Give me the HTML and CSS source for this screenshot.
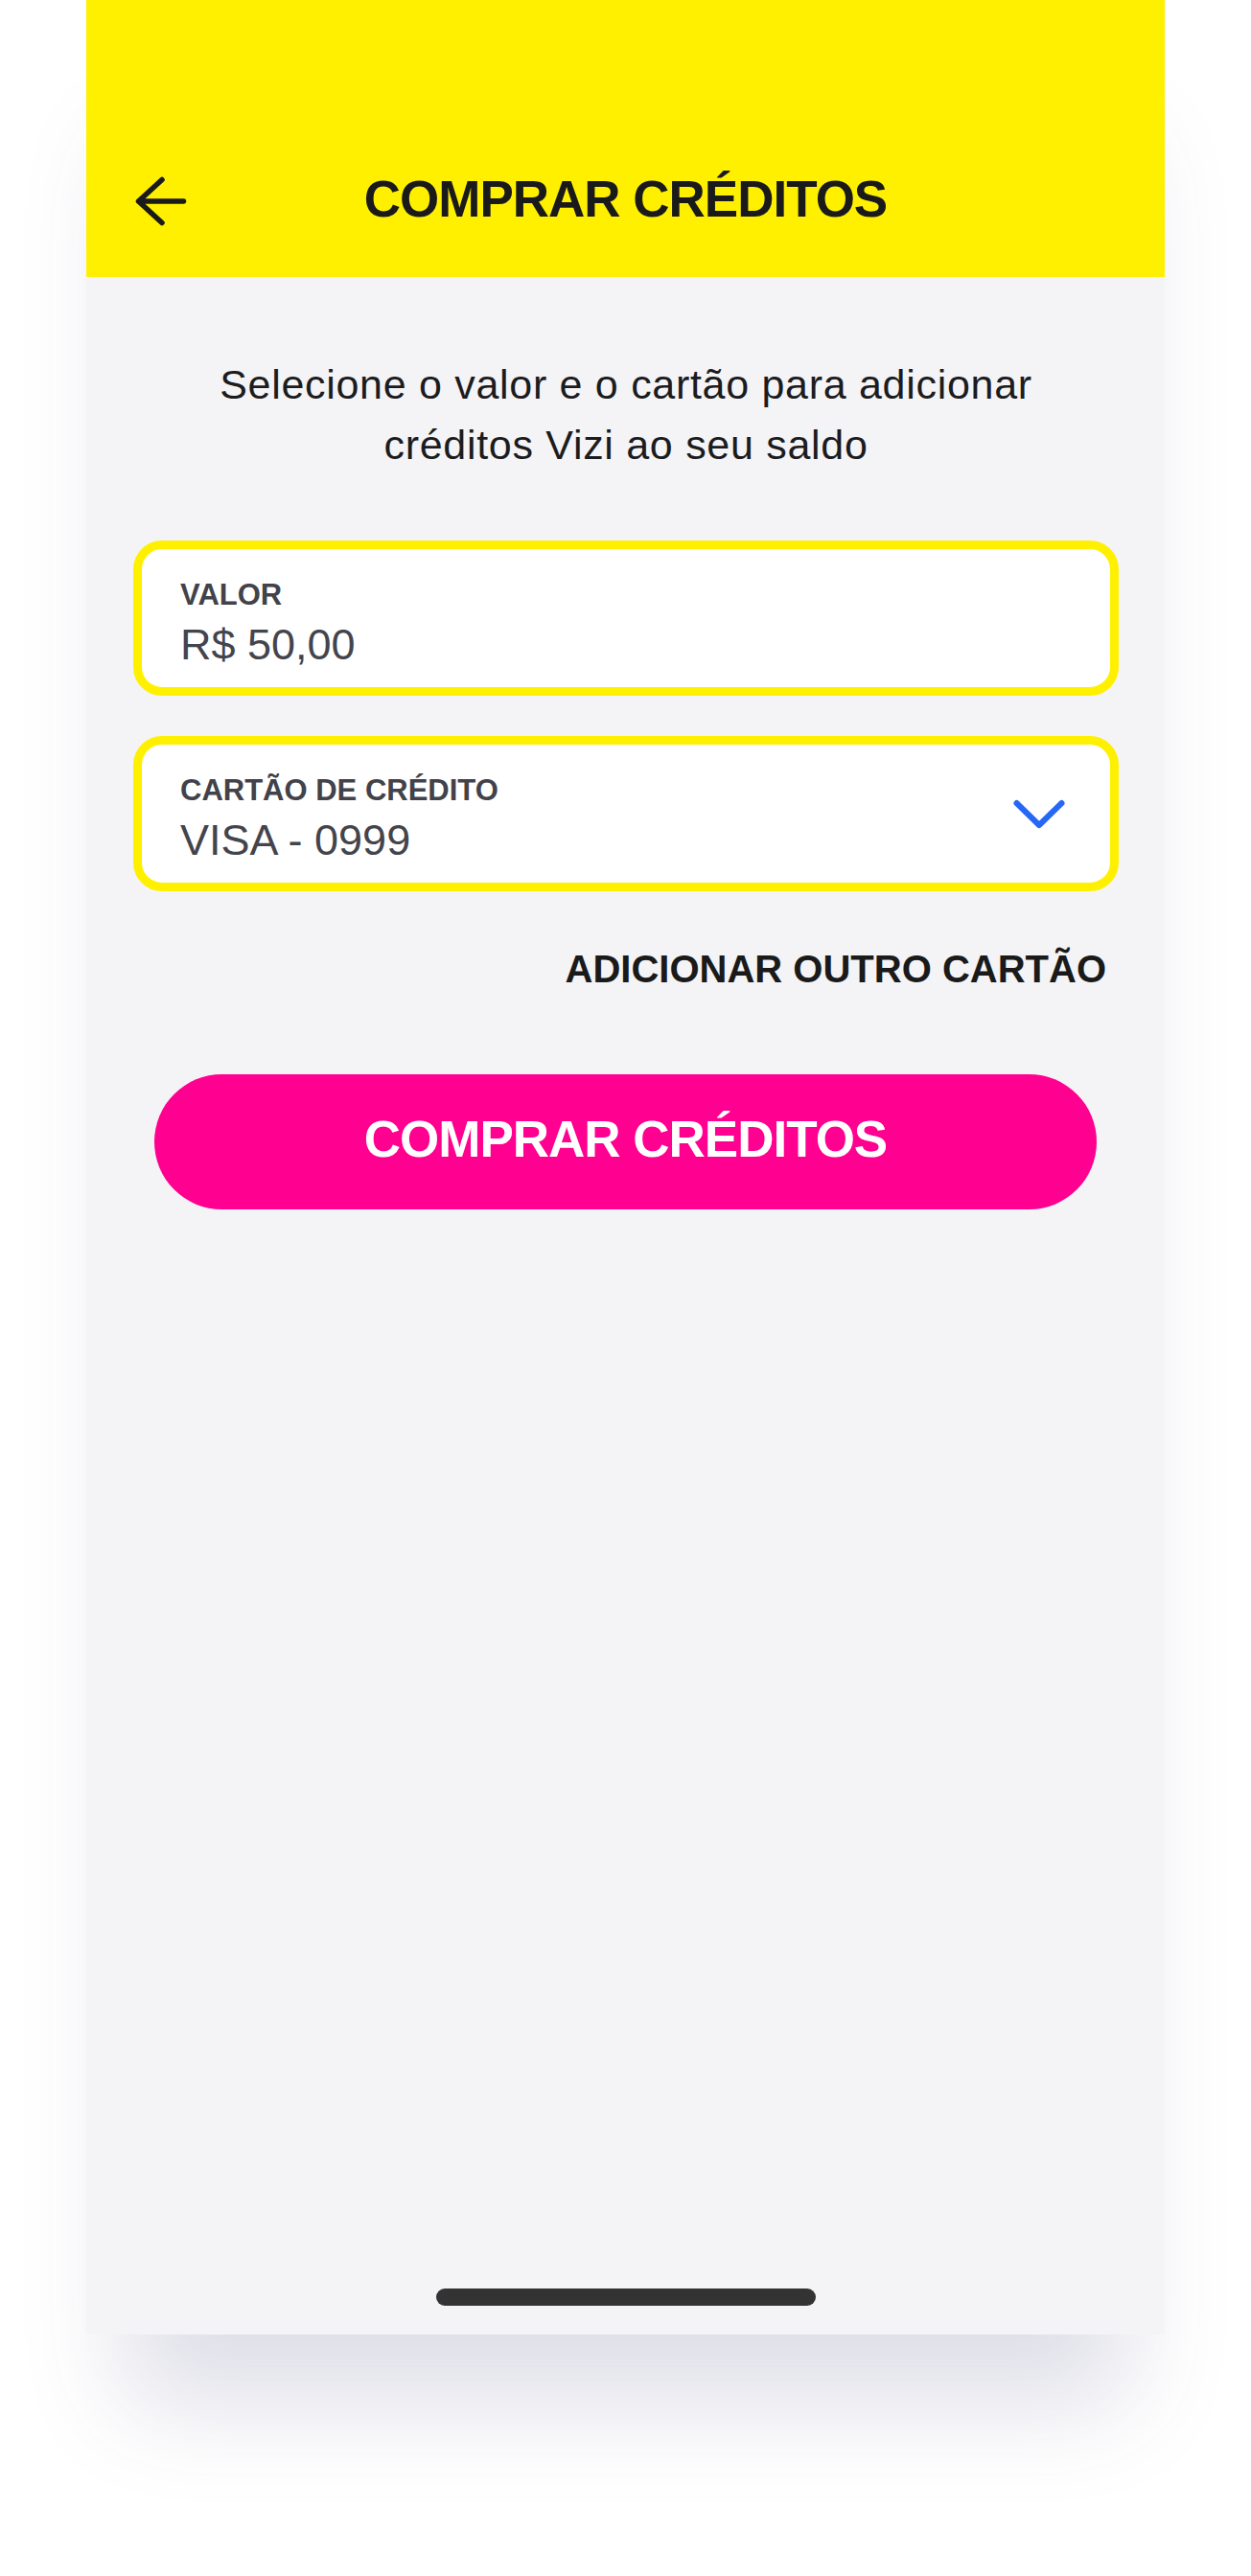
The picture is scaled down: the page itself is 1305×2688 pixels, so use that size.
FILE: index.html
```html
<!DOCTYPE html>
<html lang="pt-BR">
<head>
<meta charset="utf-8">
<title>Comprar créditos</title>
<link rel="stylesheet" href="styles.css">
</head>
<body>
<div class="phone">
  <header class="header">
    <div class="header-row">
      <button class="back" aria-label="Voltar">
        <svg width="56" height="56" viewBox="0 0 56 56" fill="none">
          <path d="M51.5 28H4.5M29 5.5L4.5 28L29 50.5" stroke="#1a1a1a" stroke-width="5.5" stroke-linecap="round" stroke-linejoin="round"/>
        </svg>
      </button>
      <h1 class="title">COMPRAR CRÉDITOS</h1>
      <span class="spacer"></span>
    </div>
  </header>
  <main class="content">
    <p class="intro">Selecione o valor e o cartão para adicionar<br>créditos Vizi ao seu saldo</p>
    <div class="fields">
      <div class="field">
        <div class="field-text">
          <span class="label">VALOR</span>
          <span class="value">R$ 50,00</span>
        </div>
      </div>
      <div class="field">
        <div class="field-text">
          <span class="label">CARTÃO DE CRÉDITO</span>
          <span class="value">VISA - 0999</span>
        </div>
        <svg class="chevron" width="56" height="36" viewBox="0 0 56 36" fill="none">
          <path d="M4.5 7L28 30L51.5 7" stroke="#2567f6" stroke-width="6" stroke-linecap="round" stroke-linejoin="round"/>
        </svg>
      </div>
    </div>
    <div class="add-card">ADICIONAR OUTRO CARTÃO</div>
    <button class="buy">COMPRAR CRÉDITOS</button>
  </main>
  <div class="home-indicator"></div>
</div>
</body>
</html>
```
FILE: styles.css
```css
* { box-sizing: border-box; }
html, body {
  margin: 0;
  padding: 0;
  background: #ffffff;
}
body {
  font-family: "Liberation Sans", Arial, sans-serif;
  height: 2688px;
  overflow: hidden;
}
.phone {
  width: 1125px;
  height: 2436px;
  margin: 0 auto;
  background: #f4f4f7;
  display: flex;
  flex-direction: column;
  box-shadow: 0 110px 100px -40px rgba(70, 70, 130, 0.18);
}
.header {
  height: 289px;
  background: #fff000;
  display: flex;
  flex-direction: column;
  justify-content: flex-end;
  padding: 0 50px 55px 50px;
}
.header-row {
  height: 52px;
  display: grid;
  grid-template-columns: 1fr auto 1fr;
  align-items: center;
}
.back {
  justify-self: start;
  width: 56px;
  height: 56px;
  padding: 0;
  margin: 0;
  border: 0;
  background: none;
  display: flex;
}
.title {
  margin: 0 0 4px 0;
  font-size: 53px;
  line-height: 52px;
  font-weight: 700;
  letter-spacing: -1px;
  color: #1a1a1a;
  white-space: nowrap;
}
.content {
  padding: 81px 48px 0 49px;
  display: flex;
  flex-direction: column;
}
.intro {
  margin: 0 0 68px 0;
  text-align: center;
  font-size: 43px;
  line-height: 63px;
  letter-spacing: 0.7px;
  color: #1c1c1e;
}
.fields {
  display: flex;
  flex-direction: column;
  gap: 42px;
}
.field {
  height: 162px;
  border: 9px solid #fff000;
  border-radius: 30px;
  background: #ffffff;
  padding: 30px 46px 18px 40px;
  display: flex;
  align-items: center;
  justify-content: space-between;
}
.field-text {
  display: flex;
  flex-direction: column;
  gap: 8px;
  align-self: flex-start;
}
.label {
  font-size: 31px;
  line-height: 36px;
  font-weight: 700;
  color: #42424a;
}
.value {
  font-size: 45px;
  line-height: 52px;
  color: #44444c;
}
.chevron {
  display: block;
  margin-top: -12px;
}
.add-card {
  margin-top: 57px;
  padding-right: 13px;
  text-align: right;
  font-size: 40px;
  line-height: 48px;
  font-weight: 700;
  color: #1a1a1a;
}
.buy {
  margin: 86px 23px 0 22px;
  height: 141px;
  border: 0;
  border-radius: 71px;
  background: #ff0090;
  color: #ffffff;
  font-family: "Liberation Sans", Arial, sans-serif;
  font-size: 53px;
  font-weight: 700;
  letter-spacing: -1px;
  padding: 0 0 6px 0;
}
.home-indicator {
  margin: auto auto 30px auto;
  width: 396px;
  height: 18px;
  border-radius: 9px;
  background: #333333;
}
```
